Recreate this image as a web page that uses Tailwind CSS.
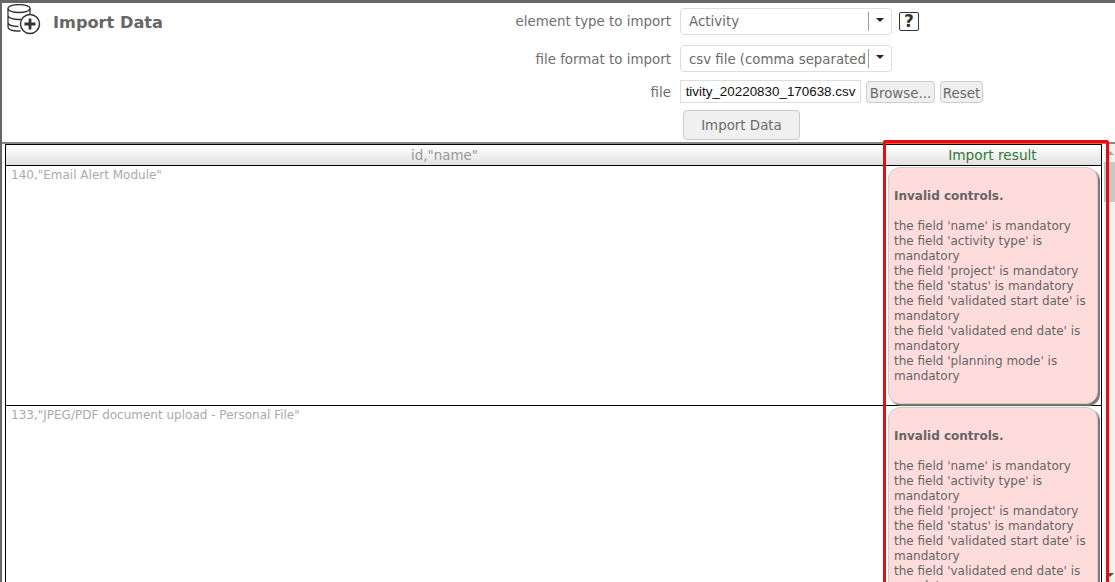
<!DOCTYPE html>
<html lang="en">
<head>
    <meta charset="UTF-8">
    <title>Import Data</title>
    <script src="https://cdn.jsdelivr.net/npm/@tailwindcss/browser@4"></script>
</head>
<body class="h-[582px] w-[1115px] overflow-hidden bg-white font-['DejaVu_Sans',sans-serif] text-[13.4px] text-[#656565]">
    <div class="relative flex h-full flex-col border-t-[3px] border-l-2 border-[#666]">
        <!-- Header + form -->
        <div class="flex h-[139px] shrink-0">
            <div class="flex w-[478px] shrink-0 items-start pl-[5px] pt-px">
                <svg class="h-[31px] w-[34px]" viewBox="0 0 34 31" fill="none" stroke="#333" stroke-width="1.3">
                    <ellipse cx="12" cy="4.500" rx="11" ry="4"/>
                    <path d="M1 4.500V23c0 2.200 4 4 9.500 4h3M23 4.500V10M1 11.500c0 2.200 5 4 11 4 .8 0 1.500 0 2.200-.1M1 18.500c0 2.200 4 4 10.500 4"/>
                    <circle cx="23" cy="20" r="9.500" fill="#fff" stroke-width="1.500"/>
                    <path d="M23 14.500v11M17.500 20h11" stroke-width="2.800"/>
                </svg>
                <h1 class="ml-[12px] mt-[8px] text-[16.2px] leading-[22px] font-bold text-[#666]">Import Data</h1>
            </div>
            <div class="flex flex-col pt-[5px]">
                <div class="flex h-[27px] items-center">
                    <label class="w-[191px] pt-[2px] text-right text-[#6e6e6e]">element type to import</label>
                    <div class="ml-[9px] flex h-[27px] w-[212px] items-center rounded-[4px] border border-[#ddd] pl-[8px]">
                        <span class="flex-1 pt-[2px] text-[#6a6a6a]">Activity</span>
                        <span class="h-[19px] w-px bg-[#999]"></span>
                        <span class="mx-[7px] mb-[3px] h-0 w-0 border-x-[4px] border-t-[4px] border-x-transparent border-t-[#222]"></span>
                    </div>
                    <span class="ml-[7px] flex h-[19px] w-[20px] items-center justify-center rounded-[2px] border border-[#333] text-[17px] font-bold text-[#333]">?</span>
                </div>
                <div class="mt-[10px] flex h-[27px] items-center">
                    <label class="w-[191px] pt-[4px] text-right text-[#6e6e6e]">file format to import</label>
                    <div class="ml-[9px] flex h-[27px] w-[212px] items-center rounded-[4px] border border-[#ddd] pl-[8px]">
                        <span class="flex-1 overflow-hidden pt-[2px] text-[13.3px] whitespace-nowrap text-[#6a6a6a]">csv file (comma separated</span>
                        <span class="h-[19px] w-px shrink-0 bg-[#999]"></span>
                        <span class="mx-[7px] mb-[3px] h-0 w-0 shrink-0 border-x-[4px] border-t-[4px] border-x-transparent border-t-[#222]"></span>
                    </div>
                </div>
                <div class="mt-[8px] flex h-[23px] items-center">
                    <label class="w-[191px] pt-[4px] text-right text-[#6e6e6e]">file</label>
                    <div class="ml-[9px] flex h-[23px] w-[181px] items-center justify-center overflow-hidden border border-[#ddd] pt-[2px] font-['Liberation_Sans',sans-serif] whitespace-nowrap text-[#111]">tivity_20220830_170638.csv</div>
                    <button class="ml-[5px] h-[22px] w-[69px] rounded-[4px] border border-[#ccc] bg-[#f0f0f0] pt-[2px] text-[#6a6a6a]">Browse...</button>
                    <button class="ml-[5px] h-[22px] w-[43px] rounded-[4px] border border-[#ccc] bg-[#f0f0f0] pt-[2px] text-[#6a6a6a]">Reset</button>
                </div>
                <button class="mt-[7px] ml-[203px] h-[30px] w-[117px] rounded-[4px] border border-[#ccc] bg-[#f0f0f0] pt-[2px] text-[#6a6a6a]">Import Data</button>
            </div>
        </div>

        <!-- Results table -->
        <div class="border-t-[2px] border-[#888] pl-[3px]">
            <div class="w-[1097px] border-x border-t border-black">
                <div class="flex h-[21px] border-b border-black bg-gradient-to-b from-white to-[#e2e2e2] leading-[21px]">
                    <div class="flex-1 text-center text-[#999]">id,"name"</div>
                    <div class="w-[218px] border-l border-black text-center text-[13.7px] text-[#2f7a35]">Import result</div>
                </div>
                <div class="flex h-[240px] border-b border-black text-[12px]">
                    <div class="flex-1 pl-[5px] leading-[18px] text-[#aaa]">140,"Email Alert Module"</div>
                    <div class="w-[218px] border-l border-black pt-px pl-[4px]">
                        <div class="h-[237px] w-[210px] rounded-[12px] border border-[#ccc] bg-[#ffdcdc] px-[5px] pt-[21px] leading-[15px] shadow-[2px_2px_1px_#777]">
                            <p class="mb-[15px] font-bold">Invalid controls.</p>
                            the field 'name' is mandatory<br>the field 'activity type' is mandatory<br>the field 'project' is mandatory<br>the field 'status' is mandatory<br>the field 'validated start date' is mandatory<br>the field 'validated end date' is mandatory<br>the field 'planning mode' is mandatory
                        </div>
                    </div>
                </div>
                <div class="flex h-[240px] text-[12px]">
                    <div class="flex-1 pl-[5px] leading-[18px] text-[#aaa]">133,"JPEG/PDF document upload - Personal File"</div>
                    <div class="w-[218px] border-l border-black pt-px pl-[4px]">
                        <div class="h-[237px] w-[210px] rounded-[12px] border border-[#ccc] bg-[#ffdcdc] px-[5px] pt-[21px] leading-[15px] shadow-[2px_2px_1px_#777]">
                            <p class="mb-[15px] font-bold">Invalid controls.</p>
                            the field 'name' is mandatory<br>the field 'activity type' is mandatory<br>the field 'project' is mandatory<br>the field 'status' is mandatory<br>the field 'validated start date' is mandatory<br>the field 'validated end date' is mandatory<br>the field 'planning mode' is mandatory
                        </div>
                    </div>
                </div>
            </div>
        </div>

        <!-- Scrollbar -->
        <div class="absolute top-[141px] right-0 h-[438px] w-[11px] bg-[#f1f1f1]">
            <span class="absolute top-[7px] right-[1px] h-0 w-0 border-x-[4px] border-b-[4px] border-x-transparent border-b-[#a3a3a3]"></span>
            <div class="mt-[18px] h-[40px] bg-[#c8c8c8]"></div>
            <span class="absolute right-[1px] bottom-[5px] h-0 w-0 border-x-[4px] border-t-[4px] border-x-transparent border-t-[#505050]"></span>
        </div>

        <!-- Red highlight drawn over the table -->
        <div class="absolute top-[137px] left-[881px] h-[460px] w-[226px] rounded-[2px] border-[3px] border-[#e01010]"></div>
    </div>
</body>
</html>
